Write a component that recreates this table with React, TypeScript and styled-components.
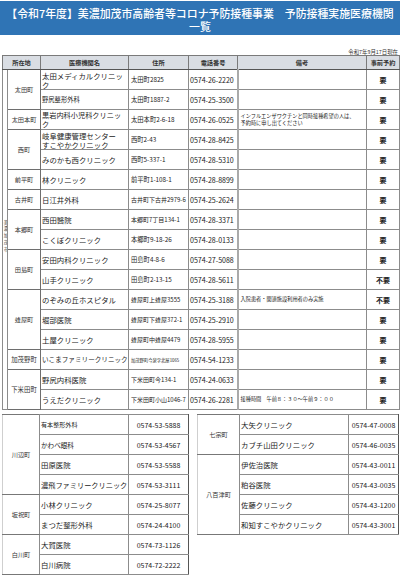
import React from "react";
import styled, { createGlobalStyle } from "styled-components";

const GlobalStyle = createGlobalStyle`
  html, body { margin: 0; padding: 0; background: #ffffff; }
  body { font-family: "Noto Sans CJK JP", "Noto Sans", sans-serif; color: #222; }
`;

const Page = styled.div`
  width: 400px;
  display: flex;
  flex-direction: column;
`;

const TitleBar = styled.header`
  margin-top: 1px;
  background: #2f74b5;
  color: #ffffff;
  text-align: center;
  font-size: 10.9px;
  font-weight: 500;
  line-height: 13px;
  padding: 6px 0 2px;
  white-space: nowrap;
`;

const DateLine = styled.div`
  text-align: right;
  font-size: 5.4px;
  line-height: 6px;
  padding: 14px 2px 0 0;
  height: 6px;
  color: #333;
`;

const MainTable = styled.table`
  margin-left: 2px;
  width: 397px;
  table-layout: fixed;
  border-collapse: collapse;
  border: 1px solid #444;
`;

const HeadRow = styled.tr`
  height: 14px;
  background: #d9dde3;
`;

const Row = styled.tr`
  height: 20px;
`;

const HeadCell = styled.th`
  border: 1px solid #7a7a7a;
  border-bottom: 1px solid #555;
  font-size: 6.2px;
  font-weight: 700;
  color: #333;
  padding: 0;
  text-align: center;
  line-height: 8px;
  overflow: hidden;
  white-space: nowrap;
`;

const Cell = styled.td`
  border: 1px solid #8c8c8c;
  padding: 0;
  vertical-align: middle;
  overflow: hidden;
  white-space: nowrap;
`;

const CityCell = styled(Cell)`
  text-align: center;
`;

const VerticalText = styled.span`
  writing-mode: vertical-rl;
  text-orientation: upright;
  font-size: 4.3px;
  letter-spacing: 2.4px;
  line-height: 5px;
  color: #333;
`;

const TownCell = styled(Cell)<{ $size?: number }>`
  text-align: center;
  font-size: ${(p) => p.$size ?? 6.2}px;
  color: #333;
  border-color: #6e6e6e;
`;

const NameCell = styled(Cell)<{ $size?: number }>`
  font-size: ${(p) => p.$size ?? 7.4}px;
  line-height: 9px;
  padding-left: 1px;
  white-space: normal;
`;

const AddrCell = styled(Cell)<{ $size?: number }>`
  font-size: ${(p) => p.$size ?? 6.3}px;
  padding-left: 2px;
`;

const PhoneCell = styled(Cell)`
  font-size: 7.1px;
  padding-left: 1px;
  letter-spacing: -0.05px;
`;

const NoteCell = styled(Cell)`
  border-left: 2px solid #aaaaaa;
  font-size: 5.2px;
  line-height: 6.6px;
  padding-left: 2px;
  white-space: normal;
`;

const ReserveCell = styled(Cell)`
  border-left-color: #666;
  text-align: center;
  font-size: 7px;
  font-weight: 700;
`;

const BottomRow = styled.div`
  display: flex;
  align-items: flex-start;
  margin-top: 4px;
  gap: 8px;
  padding-left: 2px;
`;

const SubTable = styled.table<{ $width: number }>`
  width: ${(p) => p.$width}px;
  table-layout: fixed;
  border-collapse: collapse;
  border-top: 1px solid #555;
  border-bottom: 1px solid #555;
`;

const SubTown = styled(Cell)`
  text-align: center;
  font-size: 6.2px;
  color: #333;
  border-left-color: #cfcfcf;
  border-top-color: #777;
  border-bottom-color: #777;
`;

const SubName = styled(Cell)<{ $size?: number }>`
  font-size: ${(p) => p.$size ?? 7.4}px;
  padding-left: 1px;
`;

const SubPhone = styled(Cell)`
  font-size: 7px;
  text-align: center;
  border-right-color: #555;
`;

type Entry = {
  name: React.ReactNode;
  nameSize?: number;
  addr: string;
  addrSize?: number;
  phone: string;
  note?: React.ReactNode;
  reserve: string;
};

type Group = { town: string; townSize?: number; rows: Entry[] };

const groups: Group[] = [
  {
    town: "太田町",
    rows: [
      { name: "太田メディカルクリニック", addr: "太田町2825", phone: "0574-26-2220", reserve: "要" },
      { name: "野尻整形外科", nameSize: 6.3, addr: "太田町1887-2", phone: "0574-25-3500", reserve: "要" },
    ],
  },
  {
    town: "太田本町",
    rows: [
      {
        name: "黒岩内科小児科クリニック",
        nameSize: 7.2,
        addr: "太田本町2-6-18",
        phone: "0574-26-0525",
        note: (
          <>
            インフルエンザワクチンと同時接種希望の人は、
            <br />
            予約時に申し出てください
          </>
        ),
        reserve: "要",
      },
    ],
  },
  {
    town: "西町",
    rows: [
      {
        name: (
          <>
            岐阜健康管理センター
            <br />
            すこやかクリニック
          </>
        ),
        addr: "西町2-43",
        phone: "0574-28-8425",
        reserve: "要",
      },
      { name: "みのかも西クリニック", addr: "西町5-337-1", phone: "0574-28-5310", reserve: "要" },
    ],
  },
  {
    town: "前平町",
    rows: [{ name: "林クリニック", addr: "前平町1-108-1", phone: "0574-28-8899", reserve: "要" }],
  },
  {
    town: "古井町",
    rows: [{ name: "日江井外科", addr: "古井町下古井2979-6", addrSize: 6.0, phone: "0574-25-2624", reserve: "要" }],
  },
  {
    town: "本郷町",
    rows: [
      { name: "西田醫院", addr: "本郷町7丁目134-1", addrSize: 6.0, phone: "0574-28-3371", reserve: "要" },
      { name: "こくぼクリニック", addr: "本郷町9-18-26", phone: "0574-28-0133", reserve: "要" },
    ],
  },
  {
    town: "田島町",
    rows: [
      { name: "安田内科クリニック", addr: "田島町4-8-6", phone: "0574-27-5088", reserve: "要" },
      { name: "山手クリニック", addr: "田島町2-13-15", phone: "0574-28-5611", reserve: "不要" },
    ],
  },
  {
    town: "蜂屋町",
    rows: [
      {
        name: "のぞみの丘ホスピタル",
        addr: "蜂屋町上蜂屋3555",
        addrSize: 6.0,
        phone: "0574-25-3188",
        note: "入院患者・関連施設利用者のみ実施",
        reserve: "不要",
      },
      { name: "堀部医院", addr: "蜂屋町下蜂屋372-1", addrSize: 6.0, phone: "0574-25-2910", reserve: "要" },
      { name: "土屋クリニック", addr: "蜂屋町中蜂屋4479", addrSize: 6.0, phone: "0574-28-5955", reserve: "要" },
    ],
  },
  {
    town: "加茂野町",
    townSize: 6.4,
    rows: [
      {
        name: "いこまファミリークリニック",
        nameSize: 6.6,
        addr: "加茂野町今泉字北屋1065",
        addrSize: 4.3,
        phone: "0574-54-1233",
        reserve: "要",
      },
    ],
  },
  {
    town: "下米田町",
    townSize: 6.4,
    rows: [
      { name: "野尻内科医院", addr: "下米田町今134-1", addrSize: 6.0, phone: "0574-24-0633", reserve: "要" },
      {
        name: "うえだクリニック",
        addr: "下米田町小山1046-7",
        addrSize: 6.0,
        phone: "0574-26-2281",
        note: "接種時間　午前８：３０～午前９：００",
        reserve: "要",
      },
    ],
  },
];

type SubEntry = { name: string; nameSize?: number; phone: string };
type SubGroup = { town: string; rows: SubEntry[] };

const leftGroups: SubGroup[] = [
  {
    town: "川辺町",
    rows: [
      { name: "有本整形外科", nameSize: 6.1, phone: "0574-53-5888" },
      { name: "かわべ眼科", nameSize: 6.6, phone: "0574-53-4567" },
      { name: "田原医院", phone: "0574-53-5588" },
      { name: "濃飛ファミリークリニック", nameSize: 7.2, phone: "0574-53-3111" },
    ],
  },
  {
    town: "坂祝町",
    rows: [
      { name: "小林クリニック", phone: "0574-25-8077" },
      { name: "まつだ整形外科", phone: "0574-24-4100" },
    ],
  },
  {
    town: "白川町",
    rows: [
      { name: "大賀医院", phone: "0574-73-1126" },
      { name: "白川病院", phone: "0574-72-2222" },
    ],
  },
];

const rightGroups: SubGroup[] = [
  {
    town: "七宗町",
    rows: [
      { name: "大矢クリニック", phone: "0574-47-0008" },
      { name: "カブチ山田クリニック", phone: "0574-46-0035" },
    ],
  },
  {
    town: "八百津町",
    rows: [
      { name: "伊佐治医院", phone: "0574-43-0011" },
      { name: "粕谷医院", phone: "0574-43-0035" },
      { name: "佐藤クリニック", phone: "0574-43-1200" },
      { name: "和知すこやかクリニック", phone: "0574-43-3001" },
    ],
  },
];

const totalRows = groups.reduce((n, g) => n + g.rows.length, 0);

function SubList({ data, widths }: { data: SubGroup[]; widths: number[] }) {
  const total = widths.reduce((a, b) => a + b, 0);
  return (
    <SubTable $width={total}>
      <colgroup>
        {widths.map((w, i) => (
          <col key={i} style={{ width: w }} />
        ))}
      </colgroup>
      <tbody>
        {data.map((g) =>
          g.rows.map((r, i) => (
            <Row key={g.town + r.name}>
              {i === 0 && <SubTown rowSpan={g.rows.length}>{g.town}</SubTown>}
              <SubName $size={r.nameSize}>{r.name}</SubName>
              <SubPhone>{r.phone}</SubPhone>
            </Row>
          ))
        )}
      </tbody>
    </SubTable>
  );
}

export default function App() {
  let first = true;
  return (
    <>
      <GlobalStyle />
      <Page>
        <TitleBar>
          【令和7年度】美濃加茂市高齢者等コロナ予防接種事業　予防接種実施医療機関
          <br />
          一覧
        </TitleBar>
        <DateLine>令和7年9月17日現在</DateLine>
        <MainTable>
          <colgroup>
            <col style={{ width: 5 }} />
            <col style={{ width: 33 }} />
            <col style={{ width: 88 }} />
            <col style={{ width: 60 }} />
            <col style={{ width: 49 }} />
            <col style={{ width: 129 }} />
            <col style={{ width: 33 }} />
          </colgroup>
          <thead>
            <HeadRow>
              <HeadCell colSpan={2}>所在地</HeadCell>
              <HeadCell>医療機関名</HeadCell>
              <HeadCell>住所</HeadCell>
              <HeadCell>電話番号</HeadCell>
              <HeadCell>備考</HeadCell>
              <HeadCell>事前予約</HeadCell>
            </HeadRow>
          </thead>
          <tbody>
            {groups.map((g) =>
              g.rows.map((r, i) => {
                const showCity = first;
                first = false;
                return (
                  <Row key={g.town + i}>
                    {showCity && (
                      <CityCell rowSpan={totalRows}>
                        <VerticalText>美濃加茂市</VerticalText>
                      </CityCell>
                    )}
                    {i === 0 && (
                      <TownCell rowSpan={g.rows.length} $size={g.townSize}>
                        {g.town}
                      </TownCell>
                    )}
                    <NameCell $size={r.nameSize}>{r.name}</NameCell>
                    <AddrCell $size={r.addrSize}>{r.addr}</AddrCell>
                    <PhoneCell>{r.phone}</PhoneCell>
                    <NoteCell>{r.note}</NoteCell>
                    <ReserveCell>{r.reserve}</ReserveCell>
                  </Row>
                );
              })
            )}
          </tbody>
        </MainTable>
        <BottomRow>
          <SubList data={leftGroups} widths={[37, 89, 60]} />
          <SubList data={rightGroups} widths={[42, 109, 50]} />
        </BottomRow>
      </Page>
    </>
  );
}
